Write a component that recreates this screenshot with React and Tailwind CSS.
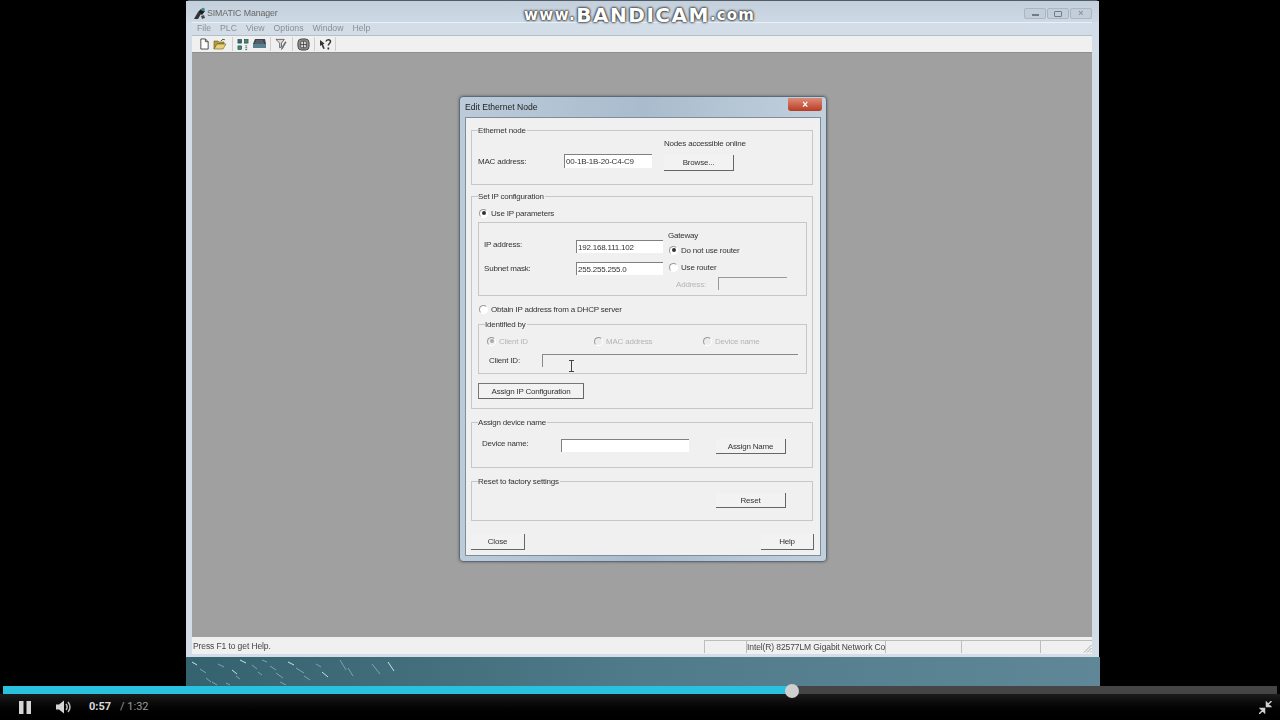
import React from 'react';

const specks = [
  [192, 662, 5, 3], [200, 669, 6, 4], [206, 678, 5, 4], [218, 664, 6, 3], [232, 670, 5, 4], [236, 676, 4, 3],
  [252, 665, 5, 4], [258, 672, 4, 3], [240, 660, 6, 3], [262, 660, 5, 2], [270, 666, 6, 4], [276, 673, 7, 5],
  [288, 662, 6, 3], [296, 668, 8, 5], [304, 676, 6, 4], [316, 664, 5, 3], [322, 672, 6, 5], [340, 660, 6, 10],
  [348, 668, 5, 8], [372, 664, 8, 10], [388, 662, 6, 9], [212, 682, 5, 3], [226, 683, 4, 2], [280, 682, 6, 3]
];

const Legend = ({ children, className = 'left-[6px]' }) => (
  <span className={`absolute -top-[7px] bg-[#f0f0f0] pr-[1px] pt-[2px] leading-[10px] text-[#333] ${className}`}>{children}</span>
);

const Group = ({ label, className = '', children }) => (
  <div className={`relative border border-[#c4c8cb] ${className}`}>
    <Legend>{label}</Legend>
    {children}
  </div>
);

const Field = ({ value, className = '' }) => (
  <div className={`shrink-0 border-t border-l border-t-[#808080] border-l-[#808080] bg-white pl-[1px] text-[#333] leading-[13px] ${className}`}>
    {value}
  </div>
);

const Btn = ({ children, className = '' }) => (
  <div className={`flex shrink-0 items-center justify-center border-r border-b border-r-[#666] border-b-[#666] bg-[#f2f2f2] pt-[1px] text-[#333] ${className}`}>
    {children}
  </div>
);

const Radio = ({ checked, disabled, label, className = '' }) => (
  <div className={`flex h-[12px] items-center ${className}`}>
    <span className={`flex h-[9px] w-[9px] shrink-0 items-center justify-center rounded-full border border-t-[#999] border-l-[#999] border-r-white border-b-white ${disabled ? 'bg-[#ececec]' : 'bg-white'}`}>
      {checked && <span className={`h-[4px] w-[4px] rounded-full ${disabled ? 'bg-[#aaa]' : 'bg-[#333]'}`} />}
    </span>
    <span className={`ml-[3px] whitespace-nowrap pt-[2px] leading-[10px] ${disabled ? 'text-[#b5b5b5]' : 'text-[#333]'}`}>{label}</span>
  </div>
);

const ToolSep = ({ className = '' }) => <div className={`h-[14px] w-[1px] bg-[#cfcfcf] ${className}`} />;

const NewIcon = () => (
  <svg width="11" height="12" viewBox="0 0 12 13"><path d="M2 1h5l3 3v8H2z" fill="#fff" stroke="#444" strokeWidth="1" /><path d="M7 1v3h3" fill="none" stroke="#444" /></svg>
);
const OpenIcon = () => (
  <svg width="14" height="12" viewBox="0 0 14 12"><path d="M1 3h4l1 1h5v2H4L1 11z" fill="#b59a3c" stroke="#6b5a20" strokeWidth=".6" /><path d="M1 11l3-5h9l-3 5z" fill="#e6cf78" stroke="#6b5a20" strokeWidth=".6" /><path d="M8 3c1-2 3-2 4-1" fill="none" stroke="#2f6b3a" strokeWidth="1" /></svg>
);
const NodesIcon = () => (
  <svg width="12" height="13" viewBox="0 0 13 13"><rect x="1" y="1" width="4" height="4" fill="#2e6f78" stroke="#123" strokeWidth=".5" /><rect x="8" y="1" width="4" height="4" fill="#3d8f63" stroke="#123" strokeWidth=".5" /><rect x="1" y="8" width="4" height="4" fill="#3d8f63" stroke="#123" strokeWidth=".5" /><path d="M9 8h2M9 10h2M9 12h2" stroke="#2e6f78" /></svg>
);
const CardIcon = () => (
  <svg width="13" height="10" viewBox="0 0 13 10"><path d="M2 0h10l1 5H0z" fill="#3b4450" /><rect x="0" y="5" width="13" height="4" fill="#55828e" /><path d="M3 2h7M2 4h9" stroke="#8b949e" strokeWidth=".7" /></svg>
);
const FilterIcon = () => (
  <svg width="13" height="13" viewBox="0 0 14 13"><path d="M1 1h9L7 5v4L5 10V5z" fill="#d9d9d9" stroke="#555" strokeWidth=".9" /><path d="M12 4L8 11l-1 1 .3-2L11 3.500z" fill="#5c7f86" stroke="#444" strokeWidth=".5" /></svg>
);
const NetIcon = () => (
  <svg width="13" height="13" viewBox="0 0 14 14"><rect x="1" y="1" width="12" height="12" rx="4" fill="#8e8e8e" stroke="#444" /><rect x="4" y="3.500" width="6" height="7" rx="1" fill="#dcdcdc" stroke="#333" strokeWidth=".8" /><path d="M7 3.500v7M4 7h6" stroke="#333" strokeWidth=".8" /></svg>
);
const HelpIcon = () => (
  <svg width="13" height="13" viewBox="0 0 13 13"><path d="M1 2l4.500 3.500-1.500 1 1.800 4-1.500.6-1.800-4L1 8z" fill="#333" /><path d="M7 3.500c.4-2.500 4.500-2.500 4.500 0 0 2-2.200 2-2.200 4" fill="none" stroke="#333" strokeWidth="1.500" /><rect x="8.500" y="9.500" width="1.700" height="2" fill="#333" /></svg>
);

const AppLogo = () => (
  <svg width="13" height="13" viewBox="0 0 13 13"><path d="M1 12l4-7 3 2-3 5z" fill="#333" /><path d="M5 5l3-3 4 2-3 4z" fill="#1c1c1c" /><circle cx="10" cy="2.500" r="1.800" fill="#3a8f8a" /><path d="M8 9l3-1 1 3-3 1z" fill="#4a4a4a" /></svg>
);

const Toolbar = () => (
  <div className="flex h-[17px] items-center border-b border-b-[#8f8f8f] bg-[#f0f0f0] pl-[5px]">
    <div className="flex w-[15px] justify-center"><NewIcon /></div>
    <div className="flex w-[15px] justify-center"><OpenIcon /></div>
    <ToolSep className="ml-[5px]" />
    <div className="ml-[1px] flex w-[17px] justify-center"><NodesIcon /></div>
    <div className="flex w-[17px] justify-center"><CardIcon /></div>
    <ToolSep className="ml-[2px]" />
    <div className="flex w-[21px] justify-center"><FilterIcon /></div>
    <ToolSep />
    <div className="flex w-[21px] justify-center"><NetIcon /></div>
    <ToolSep />
    <div className="flex w-[20px] justify-center"><HelpIcon /></div>
    <ToolSep />
  </div>
);

const EditNodeDialog = () => (
  <div className="absolute left-[267px] top-[43px] flex h-[466px] w-[368px] flex-col rounded-[4px] border border-[#5d6b78] bg-gradient-to-r from-[#bccbda] via-[#a9bccd] to-[#c2d0dd] px-[5px] pb-[5px] text-[8px] tracking-[-0.2px] shadow-[0_0_3px_rgba(0,0,0,0.4)]">
    <div className="flex h-[20px] shrink-0 items-center justify-between">
      <span className="text-[8.600px] tracking-normal text-[#222]">Edit Ethernet Node</span>
      <div className="-mr-[1px] mb-[6px] flex h-[13px] w-[34px] items-center justify-center rounded-b-[3px] bg-gradient-to-b from-[#dc8a78] to-[#b9391f] text-[10px] font-bold text-white">×</div>
    </div>
    <div className="flex flex-1 flex-col border border-[#7f8d9a] bg-[#f0f0f0] pl-[5px] pr-[7px] pt-[12px]">
      <Group label="Ethernet node" className="h-[55px]">
        <div className="flex items-start pl-[6px] pt-[6px]">
          <span className="mt-[18px] w-[86px] pt-[2px] leading-[10px] text-[#333]">MAC address:</span>
          <Field value="00-1B-1B-20-C4-C9" className="mt-[17px] h-[14px] w-[88px]" />
          <div className="ml-[12px] flex flex-col">
            <span className="pt-[2px] leading-[10px] text-[#333]">Nodes accessible online</span>
            <Btn className="mt-[6px] h-[16px] w-[70px]">Browse...</Btn>
          </div>
        </div>
      </Group>

      <Group label="Set IP configuration" className="mt-[11px] h-[213px]">
        <div className="flex flex-col pl-[6px] pt-[10px]">
          <Radio checked label="Use IP parameters" className="pl-[1px]" />
          <div className="mt-[3px] flex h-[74px] w-[329px] border border-[#c4c8cb]">
            <div className="flex w-[189px] shrink-0 flex-col pl-[5px] pt-[17px]">
              <div className="flex items-start">
                <span className="-mt-[2px] w-[92px] pt-[2px] leading-[10px] text-[#333]">IP address:</span>
                <Field value="192.168.111.102" className="h-[13px] w-[87px]" />
              </div>
              <div className="mt-[9px] flex items-start">
                <span className="w-[92px] pt-[2px] leading-[10px] text-[#333]">Subnet mask:</span>
                <Field value="255.255.255.0" className="h-[13px] w-[87px]" />
              </div>
            </div>
            <div className="flex flex-col pt-[6px]">
              <span className="pt-[2px] leading-[10px] text-[#333]">Gateway</span>
              <Radio checked label="Do not use router" className="mt-[3px] pl-[1px]" />
              <Radio label="Use router" className="mt-[5px] pl-[1px]" />
              <div className="mt-[4px] flex items-center pl-[8px]">
                <span className="w-[42px] pt-[2px] leading-[10px] text-[#b5b5b5]">Address:</span>
                <div className="h-[13px] w-[69px] border-t border-l border-t-[#999] border-l-[#999]" />
              </div>
            </div>
          </div>
          <Radio label="Obtain IP address from a DHCP server" className="mt-[7px] pl-[1px]" />
          <div className="relative mt-[9px] h-[50px] w-[329px] border border-[#c4c8cb]">
            <Legend>Identified by</Legend>
            <div className="flex pl-[8px] pt-[10px]">
              <Radio checked disabled label="Client ID" className="w-[107px]" />
              <Radio disabled label="MAC address" className="w-[109px]" />
              <Radio disabled label="Device name" />
            </div>
            <div className="mt-[7px] flex items-start pl-[10px]">
              <span className="w-[53px] pt-[2px] leading-[10px] text-[#333]">Client ID:</span>
              <div className="h-[13px] w-[256px] border-t border-l border-t-[#888] border-l-[#888]" />
            </div>
            <svg className="absolute left-[89px] top-[35px]" width="7" height="12" viewBox="0 0 7 12">
              <path d="M1 .5h5M1 11.500h5M3.500 .5v11" stroke="#444" strokeWidth="1" fill="none" />
            </svg>
          </div>
          <Btn className="mt-[9px] h-[16px] w-[106px] border border-[#777]">Assign IP Configuration</Btn>
        </div>
      </Group>

      <Group label="Assign device name" className="mt-[13px] h-[46px]">
        <div className="flex items-start pl-[10px] pt-[16px]">
          <span className="-mt-[2px] w-[79px] pt-[2px] leading-[10px] text-[#333]">Device name:</span>
          <Field value="" className="h-[13px] w-[128px]" />
          <Btn className="ml-[27px] h-[15px] w-[70px]">Assign Name</Btn>
        </div>
      </Group>

      <Group label="Reset to factory settings" className="mt-[13px] h-[40px]">
        <div className="flex justify-end pr-[26px] pt-[11px]">
          <Btn className="h-[15px] w-[70px]">Reset</Btn>
        </div>
      </Group>

      <div className="mt-[13px] flex justify-between">
        <Btn className="h-[16px] w-[54px]">Close</Btn>
        <Btn className="-mr-[1px] h-[16px] w-[53px]">Help</Btn>
      </div>
    </div>
  </div>
);

const WinBtn = ({ children }) => (
  <div className="flex h-[11px] w-[22px] items-center justify-center rounded-[2px] border border-[#a9b6c3] bg-[#c3ced9]">
    {children}
  </div>
);

const SimaticWindow = () => (
  <div className="relative flex h-[657px] w-[913px] flex-col rounded-t-[4px] border-t border-t-[#4f5c68] bg-[#d2dde8] pl-[6px] pr-[7px] pb-[3px]">
    <div className="-ml-[6px] -mr-[7px] flex h-[21px] shrink-0 items-center justify-between bg-gradient-to-b from-[#c3cfdb] to-[#cdd9e4] pl-[7px] pr-[7px] pt-[4px]">
      <div className="flex items-center">
        <AppLogo />
        <span className="ml-[1px] text-[8.800px] tracking-[-0.1px] text-[#666]">SIMATIC Manager</span>
      </div>
      <div className="flex gap-[1px]">
        <WinBtn><span className="mt-[2px] h-[2px] w-[7px] bg-[#707c88]" /></WinBtn>
        <WinBtn><span className="h-[6px] w-[8px] rounded-[1px] border border-[#707c88]" /></WinBtn>
        <WinBtn><span className="text-[9px] font-bold leading-none text-[#8a96a2]">×</span></WinBtn>
      </div>
    </div>
    <div className="flex h-[14px] shrink-0 items-center gap-[9px] border-y border-t-[#e9f1f8] border-b-[#b5bfc9] pl-[5px] text-[8.700px] text-[#8b8f94]">
      <span>File</span>
      <span>PLC</span>
      <span>View</span>
      <span>Options</span>
      <span>Window</span>
      <span>Help</span>
    </div>
    <Toolbar />
    <div className="relative flex-1 bg-[#a0a0a0]">
      <EditNodeDialog />
    </div>
    <div className="flex h-[17px] shrink-0 items-center bg-[#f0f0f0] pt-[1px] text-[8.500px] tracking-[-0.1px] text-[#444]">
      <span className="w-[512px] pl-[1px]">Press F1 to get Help.</span>
      <div className="h-[13px] w-[42px] border-t border-l border-[#bdbdbd]" />
      <div className="h-[13px] w-[139px] overflow-hidden whitespace-nowrap border-t border-l border-[#bdbdbd] leading-[13px]">Intel(R) 82577LM Gigabit Network Connection</div>
      <div className="h-[13px] w-[76px] border-t border-l border-[#bdbdbd]" />
      <div className="h-[13px] w-[79px] border-t border-l border-[#bdbdbd]" />
      <div className="flex h-[13px] flex-1 items-end justify-end border-t border-l border-[#bdbdbd]">
        <svg width="9" height="9" viewBox="0 0 9 9"><path d="M8.500 1L1 8.500M8.500 4L4 8.500M8.500 7L7 8.500" stroke="#aaa" strokeWidth="1" /></svg>
      </div>
    </div>
  </div>
);

const App = () => (
  <div className="relative flex h-[720px] w-[1280px] flex-col overflow-hidden bg-black font-['Liberation_Sans',Arial,sans-serif]">
    <div className="flex h-[686px] shrink-0 flex-col pl-[186px] blur-[0.35px]">
      <SimaticWindow />
      <div className="relative h-[29px] w-[914px] bg-gradient-to-r from-[#35626f] via-[#507b8a] to-[#5f8797]">
        <svg className="absolute left-0 top-0" width="914" height="29" viewBox="186 657 914 29">
          {specks.map(([x, y, w, h], i) => (
            <line key={i} x1={x} y1={y} x2={x + w} y2={y + h} stroke={i % 4 === 0 ? '#c9e2e8' : '#7fa3ad'} strokeWidth="1" />
          ))}
        </svg>
      </div>
    </div>

    <div className="absolute left-[524px] top-0 flex h-[30px] items-center font-['DejaVu_Sans',sans-serif] font-bold text-white [text-shadow:0_0_2px_#333,0_0_2px_#333,0_0_3px_#333]">
      <span className="text-[15px] tracking-[1.500px]">www.</span>
      <span className="text-[20px] tracking-[1.500px]">BANDICAM</span>
      <span className="text-[15px] tracking-[1.200px]">.com</span>
    </div>

    <div className="relative mx-[3px] flex h-[8px] shrink-0 bg-[#454545]">
      <div className="h-full w-[789px] bg-[#29c1de]" />
      <div className="absolute left-[782px] -top-[2px] h-[14px] w-[14px] rounded-full bg-[#cfcfcf]" />
    </div>

    <div className="flex flex-1 items-center bg-gradient-to-b from-[#1c1c1c] to-black pl-[19px] pr-[8px]">
      <svg width="12" height="13" viewBox="0 0 12 13"><rect x="0" y="0" width="4.500" height="13" fill="#d4d4d4" /><rect x="7.500" y="0" width="4.500" height="13" fill="#d4d4d4" /></svg>
      <svg className="ml-[25px]" width="15" height="14" viewBox="0 0 15 14">
        <path d="M0 4.500h3L8 .5v13l-5-4H0z" fill="#d4d4d4" />
        <path d="M10 4c1.300 1.700 1.300 4.300 0 6M12 2c2.400 3 2.400 7 0 10" fill="none" stroke="#bdbdbd" strokeWidth="1.500" />
      </svg>
      <span className="ml-[18px] font-['Roboto',sans-serif] text-[11px] font-bold text-[#dadada]">0:57</span>
      <span className="ml-[9px] font-['Roboto',sans-serif] text-[11px] text-[#9a9a9a]">/ 1:32</span>
      <svg className="ml-auto" width="13" height="13" viewBox="0 0 13 13">
        <path d="M7.500 1.500v4h4zM12.500 0L9 3.500M1.500 7.500h4v4zM0 13l3.500-3.500" fill="#cfcfcf" stroke="#cfcfcf" strokeWidth="1.500" />
      </svg>
    </div>
  </div>
);

export default App;
